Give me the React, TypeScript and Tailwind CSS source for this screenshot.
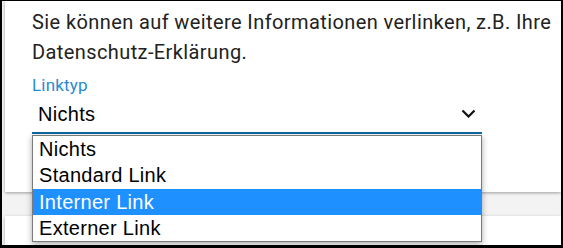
import React from "react";

export default function App() {
  const items = ["Nichts", "Standard Link", "Interner Link", "Externer Link"];
  return (
    <div className="relative w-[563px] h-[248px] overflow-hidden bg-[#f3f3f3] border-l-2 border-t border-r-2 border-b-[3px] border-black">
      <div className="ml-[3px] h-[191px] bg-white shadow-[0_1px_3px_rgba(0,0,0,0.35)] pl-[27px] pt-[6px]" style={{ fontFamily: "Roboto, sans-serif" }}>
        <p className="text-[20px] leading-[30px] tracking-[0.4px] text-[#222]">
          Sie können auf weitere Informationen verlinken, z.B. Ihre Datenschutz-Erklärung.
        </p>
        <div className="mt-[8px] text-[17px] leading-[20px] tracking-[0.2px] text-[#2a8ad0]">Linktyp</div>
        <div className="w-[450px] h-[37px] flex items-center justify-between pl-[6px] pr-[4px]">
          <span className="text-[20px] tracking-[0.3px] text-black" style={{ fontFamily: "'Liberation Sans', Arial, sans-serif" }}>Nichts</span>
          <svg width="15" height="9" viewBox="0 0 15 9" className="mr-[2px]">
            <path d="M1.5 1.5 L7.5 7.5 L13.5 1.5" fill="none" stroke="#111" strokeWidth="2.2" />
          </svg>
        </div>
        <div className="w-[450px] h-[2px] bg-[#0a6aa1]" />
      </div>
      <div className="ml-[3px] mt-[24px] h-[40px] bg-white shadow-[0_1px_3px_rgba(0,0,0,0.3)]" />
      <div
        className="absolute left-[30px] top-[134px] w-[450px] h-[107px] bg-white border border-[#7a7a7a] shadow-[0_2px_6px_rgba(0,0,0,0.35)] flex flex-col"
        style={{ fontFamily: "'Liberation Sans', Arial, sans-serif" }}
      >
        {items.map((it, i) => (
          <div
            key={it}
            className={
              i === 2
                ? "h-[26.25px] flex items-center pl-[6px] text-[20px] tracking-[0.3px] bg-[#1e90ff] text-white"
                : "h-[26.25px] flex items-center pl-[6px] text-[20px] tracking-[0.3px] text-black"
            }
          >
            {it}
          </div>
        ))}
      </div>
    </div>
  );
}
